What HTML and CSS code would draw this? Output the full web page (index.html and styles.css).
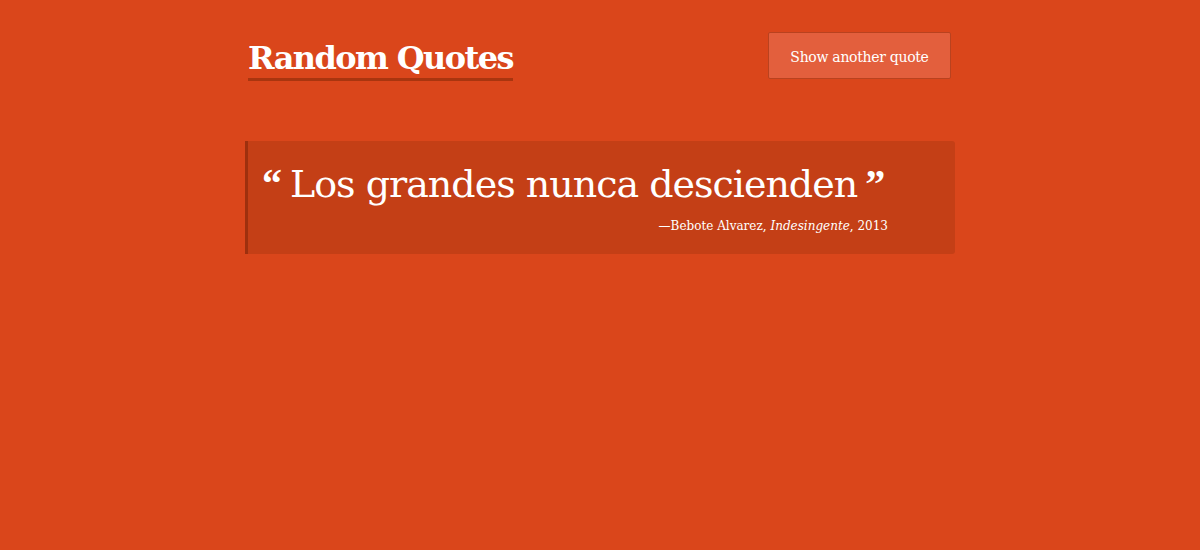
FILE: index.html
```html
<!DOCTYPE html>
<html>
<head>
<meta charset="utf-8">
<link rel="stylesheet" href="styles.css">
</head>
<body>
<div class="page">
  <header class="header">
    <h1 class="title">Random Quotes</h1>
    <button class="btn">Show another quote</button>
  </header>
  <blockquote class="quote">
    <p class="quote-text"><span class="mark open">“</span>Los grandes nunca descienden<span class="mark close">”</span></p>
    <p class="cite">—Bebote Alvarez, <em>Indesingente</em>, 2013</p>
  </blockquote>
</div>
</body>
</html>
```

FILE: styles.css
```css
html, body {
  margin: 0;
  padding: 0;
}
body {
  background: #da461b;
  font-family: "DejaVu Serif", "Liberation Serif", serif;
  color: #fff;
  height: 550px;
}
.page {
  width: 710px;
  margin: 0 auto;
}
.header {
  display: flex;
  justify-content: space-between;
  align-items: flex-start;
  padding: 32px 4px 0 3px;
}
.title {
  margin: 0;
  font-size: 32px;
  font-weight: bold;
  line-height: 40px;
  padding-top: 6px;
  border-bottom: 3px solid #a9350f;
  letter-spacing: -1.6px;
  height: 40px;
}
.btn {
  height: 47px;
  width: 183px;
  background: #e35f3d;
  border: 1px solid #b9421f;
  border-radius: 2px;
  color: #fff;
  font-family: inherit;
  font-size: 14px;
  letter-spacing: -0.3px;
  padding: 3px 0 0 0;
}
.quote {
  margin: 60px 0 0 0;
  background: #c43f16;
  border-left: 3px solid #9e300e;
  border-radius: 0 3px 3px 0;
  padding: 18px 0 16px 14px;
  height: 79px;
}
.quote-text {
  margin: 0;
  font-size: 38px;
  line-height: 50px;
  letter-spacing: -1px;
}
.mark {
  font-family: "Liberation Serif", serif;
  font-weight: bold;
  font-size: 40px;
  letter-spacing: 0;
  line-height: 0;
}
.open {
  margin-right: 8px;
}
.close {
  margin-left: 8px;
}
.cite {
  margin: 10px 0 0 0;
  width: 626px;
  text-align: right;
  font-size: 12px;
  line-height: 14px;
}
.cite em {
  font-style: italic;
}
```
